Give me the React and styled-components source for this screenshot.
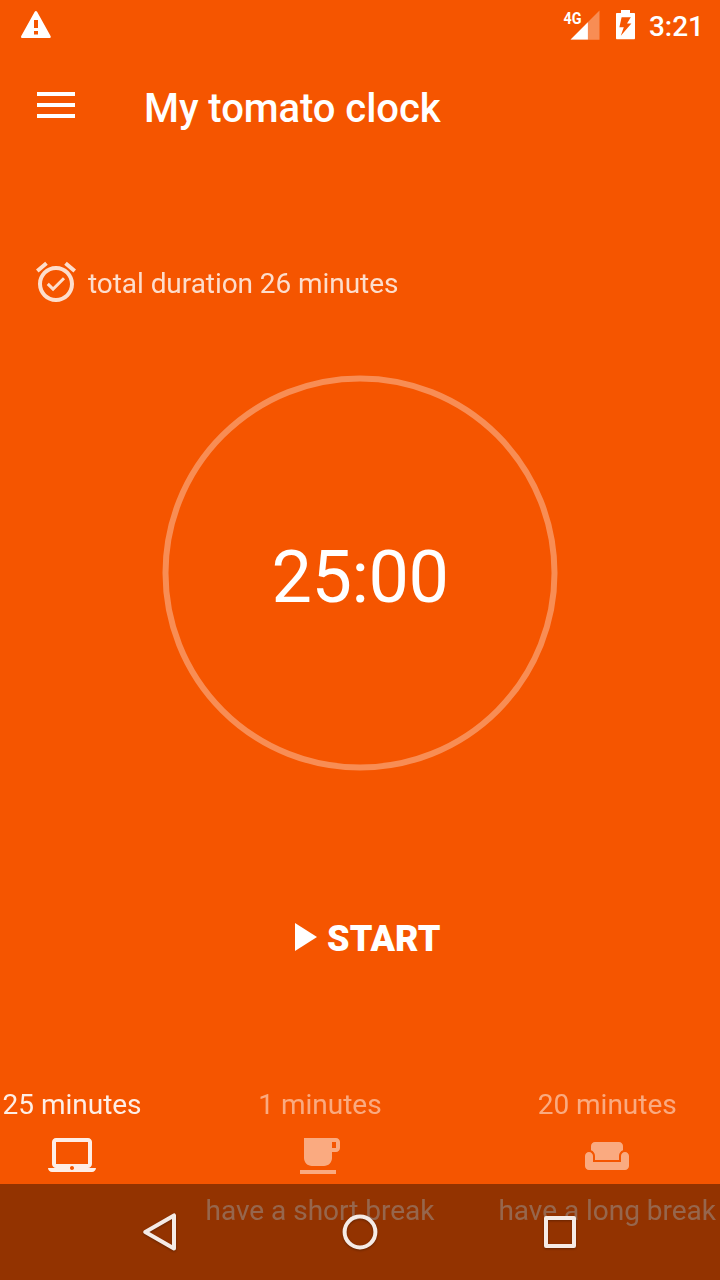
import React from "react";
import styled, { createGlobalStyle } from "styled-components";

const GlobalStyle = createGlobalStyle`
  * { box-sizing: border-box; }
  body { margin: 0; background: #f55500; }
`;

const Screen = styled.div`
  position: relative;
  display: flex;
  flex-direction: column;
  width: 720px;
  height: 1280px;
  overflow: hidden;
  background: #f55500;
  color: #fff;
  font-family: Roboto, "Noto Sans", sans-serif;
`;

const Svg = styled.svg`
  display: block;
  flex: none;
`;

const StatusBar = styled.header`
  display: flex;
  align-items: center;
  justify-content: space-between;
  height: 48px;
  padding: 0 16px 0 20px;
`;

const StatusIcons = styled.div`
  display: flex;
  align-items: center;
`;

const SignalIcon = styled(Svg)`
  margin-right: 15px;
`;

const StatusTime = styled.span`
  margin-left: 13px;
  padding-top: 5px;
  font-size: 28px;
  font-weight: 500;
  line-height: 33px;
`;

const Toolbar = styled.div`
  display: flex;
  align-items: center;
  height: 112px;
  padding-left: 37px;
`;

const MenuButton = styled.button`
  display: flex;
  flex-direction: column;
  gap: 7px;
  width: 38px;
  padding: 0;
  margin-top: 2px;
  border: 0;
  background: none;
`;

const MenuLine = styled.span`
  height: 4px;
  background: #fff;
`;

const Title = styled.h1`
  margin: 10px 0 0 69px;
  font-size: 40px;
  font-weight: 500;
  line-height: 48px;
  letter-spacing: -0.06px;
`;

const Duration = styled.div`
  display: flex;
  align-items: center;
  height: 48px;
  margin-top: 98px;
  padding-left: 32px;
  opacity: 0.8;
  font-size: 28px;
  letter-spacing: -0.06px;
`;

const DurationText = styled.span`
  margin: 3px 0 0 8px;
`;

const Dial = styled.div`
  display: grid;
  place-items: center;
  align-self: center;
  width: 396px;
  height: 396px;
  margin-top: 69px;
  font-size: 72px;
  letter-spacing: -0.5px;

  > * {
    grid-area: 1 / 1;
  }
`;

const DialTime = styled.span`
  padding-top: 8px;
`;

const StartButton = styled.button`
  display: flex;
  align-items: center;
  align-self: flex-start;
  height: 48px;
  margin: 142px 0 0 279px;
  padding: 0;
  border: 0;
  background: none;
  color: #fff;
  font-family: inherit;
  font-size: 36px;
  font-weight: 900;
  letter-spacing: 0.15px;
`;

const StartLabel = styled.span`
  padding-top: 4px;
`;

const Modes = styled.div`
  display: flex;
  justify-content: space-between;
  margin-top: 127px;
  padding: 0 4px 0 2.6px;
`;

const Mode = styled.div`
  display: flex;
  flex-direction: column;
  align-items: center;
  opacity: ${(p) => (p.$active ? 0.9 : 0.5)};
  font-size: 28px;
  line-height: 33px;
  letter-spacing: -0.02px;
  white-space: nowrap;
`;

const ModeTime = styled.span`
  margin-bottom: 11px;
`;

const ModeLabel = styled.span`
  margin-top: 14px;
`;

const NavBar = styled.nav`
  position: absolute;
  left: 0;
  right: 0;
  bottom: 0;
  display: flex;
  align-items: center;
  justify-content: center;
  gap: 152px;
  height: 96px;
  background: rgba(0, 0, 0, 0.4);
`;

const NavIcon = styled(Svg)`
  filter: drop-shadow(0 1px 1px rgba(0, 0, 0, 0.3));
`;

const ICONS = {
  alarm:
    "M22 5.72l-4.6-3.86-1.29 1.53 4.6 3.86L22 5.72zM7.88 3.39L6.6 1.86 2 5.71l1.29 1.53 4.59-3.85zM12 4c-4.97 0-9 4.03-9 9s4.02 9 9 9c4.97 0 9-4.03 9-9s-4.03-9-9-9zm0 16c-3.87 0-7-3.13-7-7s3.13-7 7-7 7 3.13 7 7-3.13 7-7 7zm-1.46-5.47L8.41 12.4l-1.06 1.06 3.18 3.18 6-6-1.06-1.06-4.93 4.95z",
  play: "M8 5v14l11-7z",
  laptop:
    "M20 18c1.1 0 1.99-.9 1.99-2L22 5c0-1.1-.9-2-2-2H4c-1.1 0-2 .9-2 2v11c0 1.1.9 2 2 2H0c0 1.1.9 2 2 2h20c1.1 0 2-.9 2-2h-4zM4 5h16v11H4V5zm8 14c-.55 0-1-.45-1-1s.45-1 1-1 1 .45 1 1-.45 1-1 1z",
  cup: "M20 3H4v10c0 2.21 1.79 4 4 4h6c2.21 0 4-1.79 4-4v-3h2c1.11 0 2-.9 2-2V5c0-1.11-.89-2-2-2zm0 5h-2V5h2v3zM2 21h18v-2H2v2z",
  sofa: "M21 10c-1.1 0-2 .9-2 2v3H5v-3c0-1.1-.9-2-2-2s-2 .9-2 2v5c0 1.1.9 2 2 2h18c1.1 0 2-.9 2-2v-5c0-1.1-.9-2-2-2zm-3-5H6c-1.1 0-2 .9-2 2v2.15c1.16.41 2 1.51 2 2.82V14h12v-2.03c0-1.3.84-2.4 2-2.82V7c0-1.1-.9-2-2-2z",
};

const Icon = ({ name }) => (
  <Svg width="48" height="48" viewBox="0 0 24 24" fill="currentColor">
    <path d={ICONS[name]} />
  </Svg>
);

const MODES = [
  { time: "25 minutes", icon: "laptop", active: true },
  { time: "1 minutes", icon: "cup", label: "have a short break" },
  { time: "20 minutes", icon: "sofa", label: "have a long break" },
];

export default function App() {
  return (
    <Screen>
      <GlobalStyle />
      <StatusBar>
        <Svg width="32" height="48" viewBox="0 0 32 48">
          <path
            fill="#fff"
            fillRule="evenodd"
            d="M14.7 11.8Q15.9 10.2 17.1 11.8L30.7 36.3Q31.2 38 29.8 38H2Q.5 38 1.1 36.3ZM14 20V28H18V20ZM14 31V34.5H18V31Z"
          />
        </Svg>
        <StatusIcons>
          <SignalIcon width="38" height="48" viewBox="0 0 38 48">
            <path fill="#fff" fillOpacity=".33" d="M36.5 10.5V39.7H7.3Z" />
            <path fill="#fff" d="M24.9 22.3V39.5H7.7Z" />
            <text
              x="0.6"
              y="23.5"
              fill="#fff"
              fontFamily="Roboto, sans-serif"
              fontSize="17"
              fontWeight="700"
              textLength="18"
              lengthAdjust="spacingAndGlyphs"
            >
              4G
            </text>
          </SignalIcon>
          <Svg width="20" height="48" viewBox="0 0 20 48">
            <path
              fill="#fff"
              fillRule="evenodd"
              d="M5 10H14V13H18.3Q19 13 19 14V38Q19 39.2 18.3 39.2H.7Q0 39.2 0 38V14Q0 13 .7 13H5ZM5.6 17.3L3.4 27.2H7.8L4.8 35.8L15.4 23.4H11L14.8 17.3Z"
            />
          </Svg>
          <StatusTime>3:21</StatusTime>
        </StatusIcons>
      </StatusBar>
      <Toolbar>
        <MenuButton aria-label="Menu">
          <MenuLine />
          <MenuLine />
          <MenuLine />
        </MenuButton>
        <Title>My tomato clock</Title>
      </Toolbar>
      <Duration>
        <Icon name="alarm" />
        <DurationText>total duration 26 minutes</DurationText>
      </Duration>
      <Dial>
        <Svg width="396" height="396" viewBox="0 0 396 396" fill="none">
          <circle cx="198" cy="198" r="194.5" stroke="#fff" strokeOpacity=".33" strokeWidth="6" />
        </Svg>
        <DialTime>25:00</DialTime>
      </Dial>
      <StartButton>
        <Icon name="play" />
        <StartLabel>START</StartLabel>
      </StartButton>
      <Modes>
        {MODES.map((m) => (
          <Mode key={m.time} $active={m.active}>
            <ModeTime>{m.time}</ModeTime>
            <Icon name={m.icon} />
            {m.label && <ModeLabel>{m.label}</ModeLabel>}
          </Mode>
        ))}
      </Modes>
      <NavBar>
        <NavIcon width="48" height="48" viewBox="0 0 48 48" fill="none" stroke="#f5ebe6" strokeWidth="4" strokeLinejoin="round">
          <path d="M38 7.4V40.6L9.3 24Z" />
        </NavIcon>
        <NavIcon width="48" height="48" viewBox="0 0 48 48" fill="none" stroke="#f5ebe6" strokeWidth="4">
          <circle cx="24" cy="24" r="15.4" />
        </NavIcon>
        <NavIcon width="48" height="48" viewBox="0 0 48 48" fill="none" stroke="#f5ebe6" strokeWidth="4" strokeLinejoin="round">
          <rect x="10" y="10" width="28" height="28" />
        </NavIcon>
      </NavBar>
    </Screen>
  );
}
